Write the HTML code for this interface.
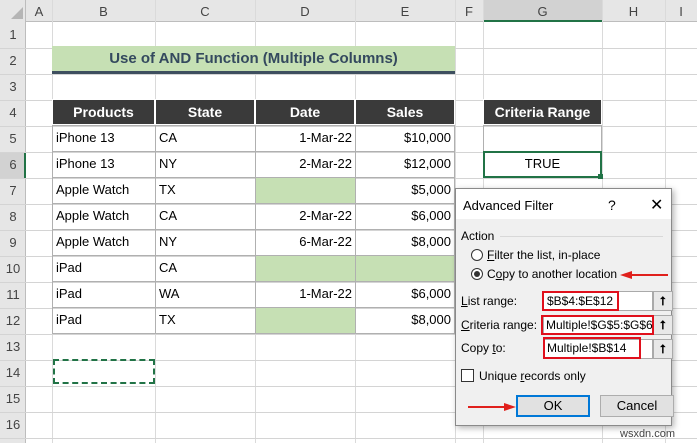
<!DOCTYPE html><html><head><style>
body{margin:0;width:697px;height:443px;overflow:hidden;background:#fff;font-family:"Liberation Sans",sans-serif;position:relative}
.a{position:absolute;box-sizing:border-box}
.hl{position:absolute;height:1px;background:#d4d4d4}
.vl{position:absolute;width:1px;background:#d4d4d4}
.t{position:absolute;font-size:13px;color:#000;white-space:nowrap}
.hd{position:absolute;background:#3a3a3a;color:#fff;font-weight:bold;font-size:14px;text-align:center;box-sizing:border-box;border:1px solid #fff}
.c{position:absolute;border:1px solid #b0b0b0;box-sizing:border-box;font-size:13px;line-height:24px;padding:0 3px;white-space:nowrap}
.dl{font-family:"Liberation Sans",sans-serif;font-size:12px;color:#000}
</style></head><body>
<!-- column header -->
<div class="a" style="left:0;top:0;width:697px;height:22px;background:#e6e6e6;border-bottom:1px solid #bdbdbd"></div>
<div class="a" style="left:0;top:0;width:26px;height:443px;background:#e6e6e6;border-right:1px solid #bdbdbd"></div>
<div class="a" style="left:483px;top:0;width:119px;height:22px;background:#d2d2d2;border-bottom:2px solid #217346"></div>
<div class="a" style="left:0;top:152px;width:26px;height:26px;background:#d2d2d2;border-right:2px solid #217346"></div>
<svg class="a" style="left:10px;top:6px" width="14" height="14"><path d="M13 1V13H1Z" fill="#b5b5b5"/></svg>
<div id="cols"></div><div id="rows"></div>
<script>
var cx=[26,52,155,255,355,455,483,602,665,697],L="ABCDEFGHI";
var h="";for(var i=0;i<9;i++){h+='<div class="t" style="left:'+cx[i]+'px;width:'+(cx[i+1]-cx[i])+'px;top:4px;text-align:center;color:#444">'+L[i]+'</div>';h+='<div class="vl" style="left:'+cx[i+1]+'px;top:0;height:443px;background:'+(i<8?'#dadada':'#dadada')+'"></div>';}
for(var r=1;r<=16;r++){var y=22+(r-1)*26;h+='<div class="t" style="left:0;width:26px;text-align:center;top:'+(y+5)+'px;color:#444">'+r+'</div>';h+='<div class="hl" style="left:0;width:697px;top:'+(y+26)+'px"></div>';}
document.getElementById('cols').innerHTML=h;
</script>
<!-- title -->
<div class="a" style="left:52px;top:46px;width:403px;height:28px;background:#c6e0b4;border-bottom:3px solid #3e4f5f;text-align:center;font-weight:bold;font-size:15px;line-height:26px;color:#34495e">Use of AND Function (Multiple Columns)</div>
<!-- table -->
<div class="hd" style="left:52px;top:99px;width:103px;height:26px;line-height:24px">Products</div>
<div class="hd" style="left:155px;top:99px;width:100px;height:26px;line-height:24px">State</div>
<div class="hd" style="left:255px;top:99px;width:100px;height:26px;line-height:24px">Date</div>
<div class="hd" style="left:355px;top:99px;width:100px;height:26px;line-height:24px">Sales</div>
<div class="hd" style="left:483px;top:99px;width:119px;height:26px;line-height:24px">Criteria Range</div>
<div id="tb"></div>
<script>
var d=[["iPhone 13","CA","1-Mar-22","$10,000"],["iPhone 13","NY","2-Mar-22","$12,000"],["Apple Watch","TX","","$5,000"],["Apple Watch","CA","2-Mar-22","$6,000"],["Apple Watch","NY","6-Mar-22","$8,000"],["iPad","CA","",""],["iPad","WA","1-Mar-22","$6,000"],["iPad","TX","","$8,000"]];
var h="";for(var i=0;i<8;i++){var y=125+i*26;var r=d[i];
h+='<div class="c" style="left:52px;top:'+y+'px;width:104px;height:27px">'+r[0]+'</div>';
h+='<div class="c" style="left:155px;top:'+y+'px;width:101px;height:27px">'+r[1]+'</div>';
h+='<div class="c" style="left:255px;top:'+y+'px;width:101px;height:27px;text-align:right;'+(r[2]==""?'background:#c6e0b4':'')+'">'+r[2]+'</div>';
h+='<div class="c" style="left:355px;top:'+y+'px;width:100px;height:27px;text-align:right;'+(r[3]==""?'background:#c6e0b4':'')+'">'+r[3]+'</div>';}
document.getElementById('tb').innerHTML=h;
</script>
<div class="c" style="left:483px;top:125px;width:119px;height:27px"></div>
<div class="c" style="left:483px;top:151px;width:119px;height:27px;border:2px solid #217346;text-align:center;line-height:22px">TRUE</div>
<div class="a" style="left:598px;top:174px;width:5px;height:5px;background:#217346"></div>
<div class="a" style="left:53px;top:359px;width:102px;height:25px;border:2px dashed #217346"></div>
<!-- dialog -->
<div class="a" style="left:455px;top:188px;width:217px;height:238px;background:#f0f0f0;border:1px solid #8a8a8a;box-shadow:2px 2px 6px rgba(0,0,0,.3)"></div>
<div class="a" style="left:456px;top:189px;width:215px;height:30px;background:#fff"></div>
<div class="t dl" style="left:463px;top:198px;font-size:13px">Advanced Filter</div>
<div class="t dl" style="left:608px;top:197px;font-size:14px">?</div>
<div class="t dl" style="left:650px;top:195px;font-size:16px">✕</div>
<div class="t dl" style="left:461px;top:229px">Action</div>
<div class="a" style="left:500px;top:236px;width:163px;height:1px;background:#d8d8d8"></div>
<div class="a" style="left:471px;top:249px;width:12px;height:12px;border:1px solid #333;border-radius:50%;background:#fff"></div>
<div class="t dl" style="left:487px;top:248px"><u>F</u>ilter the list, in-place</div>
<div class="a" style="left:471px;top:268px;width:12px;height:12px;border:1px solid #333;border-radius:50%;background:#fff"></div>
<div class="a" style="left:474px;top:271px;width:6px;height:6px;border-radius:50%;background:#333"></div>
<div class="t dl" style="left:487px;top:267px">C<u>o</u>py to another location</div>
<svg class="a" style="left:620px;top:270px" width="50" height="10"><path d="M48 5H10" stroke="#e0201c" stroke-width="2"/><path d="M0 5L12 1V9Z" fill="#e0201c"/></svg>
<div class="t dl" style="left:461px;top:294px"><u>L</u>ist range:</div>
<div class="t dl" style="left:461px;top:318px"><u>C</u>riteria range:</div>
<div class="t dl" style="left:461px;top:341px">Copy <u>t</u>o:</div>
<div class="a" style="left:543px;top:291px;width:110px;height:20px;background:#fff;border:1px solid #aaa"></div>
<div class="a" style="left:543px;top:315px;width:110px;height:20px;background:#fff;border:1px solid #aaa"></div>
<div class="a" style="left:543px;top:339px;width:110px;height:20px;background:#fff;border:1px solid #aaa"></div>
<div class="a" style="left:653px;top:291px;width:20px;height:20px;background:#e8e8e8;border:1px solid #aaa;text-align:center;font-size:12px;font-weight:bold;line-height:18px">⭡</div>
<div class="a" style="left:653px;top:315px;width:20px;height:20px;background:#e8e8e8;border:1px solid #aaa;text-align:center;font-size:12px;font-weight:bold;line-height:18px">⭡</div>
<div class="a" style="left:653px;top:339px;width:20px;height:20px;background:#e8e8e8;border:1px solid #aaa;text-align:center;font-size:12px;font-weight:bold;line-height:18px">⭡</div>
<div class="a dl" style="left:542px;top:291px;width:77px;height:20px;border:2px solid #e0101c;padding-left:3px;line-height:16px">$B$4:$E$12</div>
<div class="a dl" style="left:541px;top:315px;width:113px;height:20px;border:2px solid #e0101c;padding-left:3px;line-height:17px">Multiple!$G$5:$G$6</div>
<div class="a dl" style="left:543px;top:337px;width:98px;height:22px;border:2px solid #e0101c;padding-left:2px;line-height:19px">Multiple!$B$14</div>
<div class="a" style="left:461px;top:369px;width:13px;height:13px;border:1px solid #333;background:#fff"></div>
<div class="t dl" style="left:479px;top:369px">Unique <u>r</u>ecords only</div>
<svg class="a" style="left:468px;top:402px" width="48" height="10"><path d="M0 5H38" stroke="#e0201c" stroke-width="2"/><path d="M48 5L36 1V9Z" fill="#e0201c"/></svg>
<div class="a dl" style="left:516px;top:395px;width:74px;height:22px;border:2px solid #0078d7;background:#e1e1e1;text-align:center;line-height:18px;font-size:13px">OK</div>
<div class="a dl" style="left:600px;top:395px;width:74px;height:22px;border:1px solid #adadad;background:#e1e1e1;text-align:center;line-height:20px;font-size:13px">Cancel</div>
<div class="t" style="left:620px;top:428px;font-size:11px;color:#444">wsxdn.com</div>
</body></html>
